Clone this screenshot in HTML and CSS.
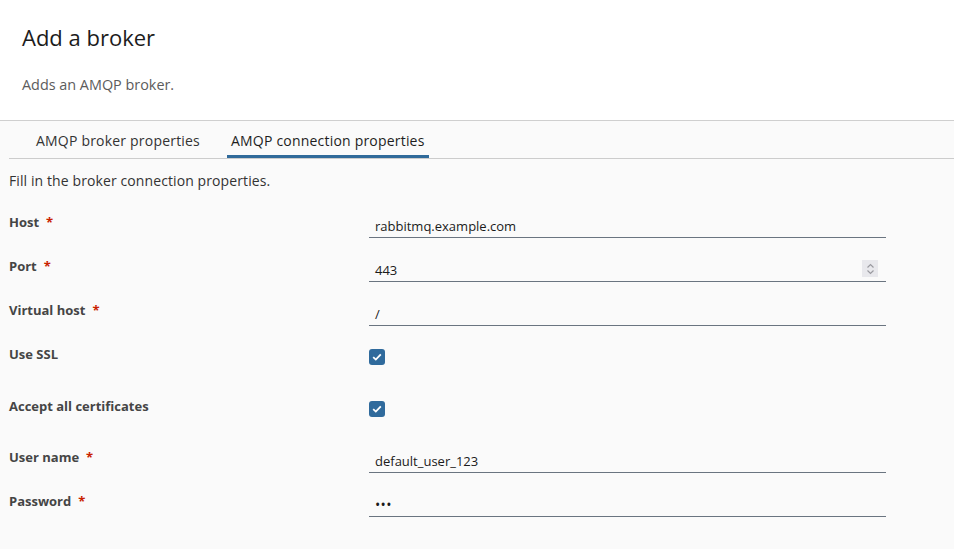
FILE: index.html
```html
<!DOCTYPE html>
<html>
<head>
<meta charset="utf-8">
<link rel="stylesheet" href="styles.css">
</head>
<body>
<header class="head">
  <h1 class="title">Add a broker</h1>
  <p class="subtitle">Adds an AMQP broker.</p>
</header>
<main class="content">
  <nav class="tabs">
    <span class="tab">AMQP broker properties</span>
    <span class="tab active">AMQP connection properties</span>
  </nav>
  <p class="intro">Fill in the broker connection properties.</p>
  <form class="form">
    <div class="row">
      <label class="label">Host<span class="req">*</span></label>
      <div class="field"><span class="value">rabbitmq.example.com</span></div>
    </div>
    <div class="row">
      <label class="label">Port<span class="req">*</span></label>
      <div class="field"><span class="value">443</span><span class="spin"><svg width="9" height="12" viewBox="0 0 9 12"><path d="M1.5 4.5 L4.5 1.5 L7.5 4.5" fill="none" stroke="#9a9aa0" stroke-width="1.2"/><path d="M1.5 7.5 L4.5 10.5 L7.5 7.5" fill="none" stroke="#9a9aa0" stroke-width="1.2"/></svg></span></div>
    </div>
    <div class="row">
      <label class="label">Virtual host<span class="req">*</span></label>
      <div class="field"><span class="value">/</span></div>
    </div>
    <div class="row check-row ssl">
      <label class="label">Use SSL</label>
      <span class="checkbox"><svg width="10" height="8" viewBox="0 0 10 8"><path d="M1.2 4.2 L3.8 6.6 L8.8 1.4" fill="none" stroke="#fff" stroke-width="1.8"/></svg></span>
    </div>
    <div class="row check-row">
      <label class="label">Accept all certificates</label>
      <span class="checkbox"><svg width="10" height="8" viewBox="0 0 10 8"><path d="M1.2 4.2 L3.8 6.6 L8.8 1.4" fill="none" stroke="#fff" stroke-width="1.8"/></svg></span>
    </div>
    <div class="row">
      <label class="label">User name<span class="req">*</span></label>
      <div class="field"><span class="value">default_user_123</span></div>
    </div>
    <div class="row">
      <label class="label">Password<span class="req">*</span></label>
      <div class="field"><span class="value dots">•••</span></div>
    </div>
  </form>
</main>
</body>
</html>
```
FILE: styles.css
```css
* { box-sizing: border-box; }
html, body { margin: 0; padding: 0; }
body {
  font-family: "Open Sans", Lato, sans-serif;
  background: #fafafa;
  color: #333;
  width: 954px;
  height: 549px;
  overflow: hidden;
}
.head {
  background: #fff;
  height: 121px;
  border-bottom: 1px solid #cfcfcf;
  padding: 23px 0 0 22px;
}
.title {
  margin: 0;
  font-size: 22px;
  font-weight: 400;
  color: #1c1c1c;
  line-height: 28px;
}
.subtitle {
  margin: 24px 0 0 0;
  font-size: 14.4px;
  color: #5c5c5c;
  line-height: 20px;
}
.content {
  padding: 0 0 0 9px;
}
.tabs {
  display: flex;
  height: 38px;
  border-bottom: 1px solid #cccccc;
  padding-left: 23px;
  gap: 23px;
}
.tab {
  font-size: 14px;
  letter-spacing: 0.2px;
  color: #333;
  padding: 10px 4px 0;
  line-height: 20px;
}
.tab.active {
  color: #1e1e1e;
  box-shadow: inset 0 -3px 0 #306a9a;
}
.intro {
  margin: 12px 0 0 0;
  font-size: 14px;
  letter-spacing: 0.1px;
  line-height: 20px;
  color: #333;
}
.form {
  display: flex;
  flex-direction: column;
  gap: 20px;
  margin-top: 23px;
}
.row {
  display: flex;
  align-items: flex-start;
  height: 24px;
}
.check-row { height: 31px; }
.check-row.ssl { height: 32px; }
.label {
  width: 360px;
  flex: none;
  font-size: 13px;
  font-weight: 700;
  color: #454545;
  line-height: 16px;
  margin-top: 0;
}
.req {
  color: #c92100;
  margin-left: 7px;
}
.field {
  width: 517px;
  height: 24px;
  border-bottom: 1px solid #6a7480;
  display: flex;
  align-items: center;
  justify-content: space-between;
  padding: 0 8px 0 6px;
}
.value {
  font-size: 13px;
  color: #1b1b1b;
  line-height: 16px;
  padding-top: 1px;
}
.dots { letter-spacing: 0.3px; font-size: 14px; }
.spin {
  width: 16px;
  height: 17px;
  background: #e8e8ec;
  display: flex;
  align-items: center;
  justify-content: center;
  margin-bottom: 2px;
}
.checkbox {
  width: 16px;
  height: 16px;
  margin-top: 3px;
  border-radius: 3px;
  background: #2f6a9c;
  display: flex;
  align-items: center;
  justify-content: center;
}
```
